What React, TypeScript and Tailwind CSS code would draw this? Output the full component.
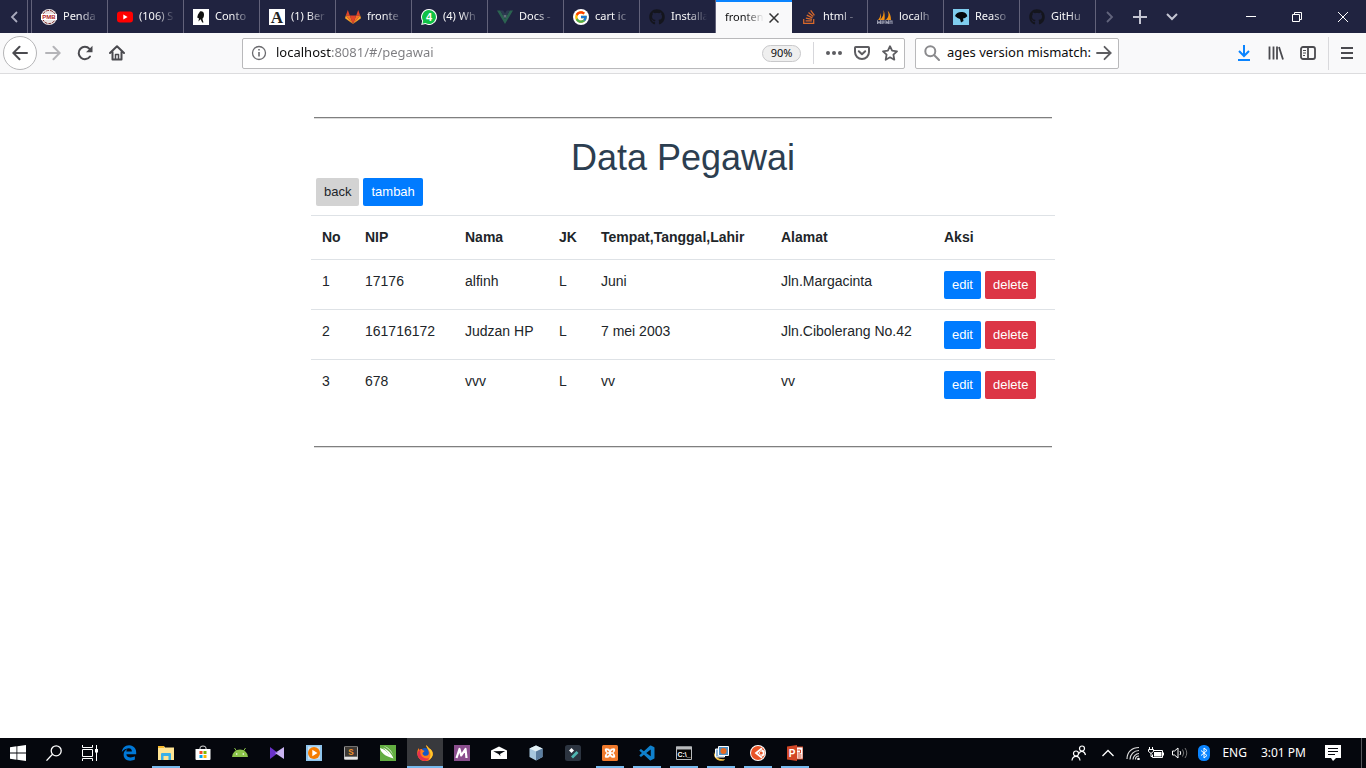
import type { ReactNode } from "react";
import { FaGithub, FaEdgeLegacy, FaStackOverflow } from "react-icons/fa6";
import { FcGoogle } from "react-icons/fc";
import { BiLogoVisualStudio } from "react-icons/bi";

type Tab = { title: string; icon?: ReactNode; active?: boolean };

const tabs: Tab[] = [
  {
    title: "Penda",
    icon: (
      <svg viewBox="0 0 16 16" className="size-4">
        <circle cx="8" cy="8" r="8" fill="#e9e4e4" />
        <circle cx="8" cy="8" r="6.6" fill="none" stroke="#7d2a2a" strokeWidth="1" strokeDasharray="3 1" />
        <rect y="5" width="16" height="6" fill="#fff" />
        <text x="8" y="10.2" fontSize="6" fontWeight="700" textAnchor="middle" fill="#b01e1e" fontFamily="Liberation Sans, sans-serif">PMB</text>
      </svg>
    ),
  },
  {
    title: "(106) S",
    icon: (
      <svg viewBox="0 0 16 16" className="size-4">
        <rect y="2.5" width="16" height="11" rx="3" fill="#f00" />
        <path d="M6.3 5.6v4.8L10.6 8z" fill="#fff" />
      </svg>
    ),
  },
  {
    title: "Conto",
    icon: (
      <svg viewBox="0 0 16 16" className="size-4">
        <rect width="16" height="16" fill="#fff" />
        <path d="M7 2.5c2-.6 4 .5 4 3 0 2-.6 3.6-1.6 4.3l1.1 3.6H9.2L7.6 10.3 5.4 12.5 6 9.5 4.2 8.500 5 5.5z" fill="#111" />
      </svg>
    ),
  },
  {
    title: "(1) Ber",
    icon: (
      <svg viewBox="0 0 16 16" className="size-4">
        <rect width="16" height="16" fill="#fff" />
        <text x="8" y="14" fontSize="17" fontWeight="700" textAnchor="middle" fill="#222" fontFamily="Liberation Serif, serif">A</text>
      </svg>
    ),
  },
  {
    title: "fronte",
    icon: (
      <svg viewBox="0 0 16 16" className="size-4">
        <path d="M2.800 1 4.800 6.500H.8zM13.200 1l2 5.500h-4z" fill="#e24329" />
        <path d="M8 15 4.800 6.500h6.400z" fill="#e24329" />
        <path d="M8 15 .8 6.500h4zM8 15l7.200-8.500h-4z" fill="#fc6d26" />
        <path d="M8 15 .8 6.500 0 9.200zM8 15l7.200-8.500.8 2.700z" fill="#fca326" />
      </svg>
    ),
  },
  {
    title: "(4) Wh",
    icon: (
      <svg viewBox="0 0 16 16" className="size-4">
        <path d="M8 0a8 8 0 1 1-3.700 15.100L.2 16l1-3.900A8 8 0 0 1 8 0z" fill="#fff" />
        <path d="M8 1a7 7 0 1 1-3.500 13.100L1.500 14.700l.7-2.900A7 7 0 0 1 8 1z" fill="#10c146" />
        <text x="8" y="12" fontSize="11" fontWeight="700" textAnchor="middle" fill="#fff" fontFamily="Liberation Sans, sans-serif">4</text>
      </svg>
    ),
  },
  {
    title: "Docs -",
    icon: (
      <svg viewBox="0 0 16 16" className="size-4">
        <path d="M0 1.500h3.200L8 9.800l4.800-8.300H16L8 15z" fill="#2b6350" />
        <path d="M3.200 1.500h3L8 4.600l1.800-3.100h3L8 9.800z" fill="#2c3a50" />
        <path d="M6.700 6h2.600v2.500H6.700z" fill="#63717d" />
      </svg>
    ),
  },
  { title: "cart ic", icon: <span className="flex size-4 items-center justify-center rounded-full bg-white"><FcGoogle className="size-3.5" /></span> },
  { title: "Installa", icon: <FaGithub className="size-4 text-[#14151d]" /> },
  { title: "fronten", active: true },
  {
    title: "html -",
    icon: <FaStackOverflow className="size-4 text-[#d9692a]" />,
  },
  {
    title: "localh",
    icon: (
      <svg viewBox="0 0 16 16" className="size-4">
        <path d="M6.500 1C7 5 6 8 3 11h4.500C8 7 7.800 4 6.500 1zM10.500 1.500C12 5 12 8 8.800 11H14C14 7 13 4 10.500 1.500zM3.500 4C3.600 7 2.600 9 1 11h2c1.200-2 1.300-4.500.5-7z" fill="#f29111" />
        <path d="M.5 15V12l1.500 2 1.500-2v3M5 15v-3h2v2H5m4 1v-3l1.300 2 1.200-2v3m1.500 0v-3h2v3" fill="none" stroke="#9a9db0" strokeWidth="1.100" />
      </svg>
    ),
  },
  {
    title: "Reaso",
    icon: (
      <svg viewBox="0 0 16 16" className="size-4">
        <rect width="16" height="16" fill="#7fcdee" />
        <path d="M2 7c1-3 4-4.500 7.500-4 3 .4 4.500 2 4.800 4.200L12 9l-2 .5.5 2.500-2.500 1.500L7 10 4.500 9z" fill="#05080b" />
      </svg>
    ),
  },
  { title: "GitHu", icon: <FaGithub className="size-4 text-[#14151d]" /> },
];

function TabItem({ tab }: { tab: Tab }) {
  if (tab.active) {
    return (
      <div role="tab" aria-selected="true" className="flex w-[76px] shrink-0 items-center border-t-2 border-[#0a84ff] bg-[#f9f9fa] pl-[9px] text-[#0c0c0d]">
        <span className="w-[39px] whitespace-nowrap [mask-image:linear-gradient(to_right,black_50%,transparent)]">{tab.title}</span>
        <button aria-label="Close tab" className="ml-[5px] flex">
          <svg viewBox="0 0 10 10" className="size-2.5" fill="none" stroke="#333" strokeWidth="1.500">
            <path d="m.5.5 9 9m0-9-9 9" />
          </svg>
        </button>
      </div>
    );
  }
  return (
    <div role="tab" aria-selected="false" className="flex w-[76px] shrink-0 items-center border-r border-[#62627a] pr-1.5 pl-[9px]">
      <span className="flex size-4 shrink-0">{tab.icon}</span>
      <span className="ml-1.5 min-w-0 flex-1 whitespace-nowrap [mask-image:linear-gradient(to_right,black_45%,transparent_95%)]">{tab.title}</span>
    </div>
  );
}

function TabBar() {
  return (
    <div className="flex h-[33px] bg-[#202340] text-[11px] text-[#f9f9fa]">
      <button aria-label="Scroll tabs left" className="flex w-7 shrink-0 items-center justify-center border-r border-[#62627a]">
        <svg viewBox="0 0 8 12" className="h-3 w-2" fill="none" stroke="#a9aabd" strokeWidth="1.800"><path d="M7 1 2 6l5 5" /></svg>
      </button>
      <div role="tablist" className="flex min-w-0 pl-[3px]">
        <div className="flex border-l border-[#62627a]">
          {tabs.map((t, i) => <TabItem key={i} tab={t} />)}
        </div>
      </div>
      <button aria-label="Scroll tabs right" className="flex w-7 shrink-0 items-center justify-center">
        <svg viewBox="0 0 8 12" className="h-3 w-2" fill="none" stroke="#62647c" strokeWidth="1.800"><path d="m1 1 5 5-5 5" /></svg>
      </button>
      <button aria-label="New tab" className="flex w-8 shrink-0 items-center justify-center">
        <svg viewBox="0 0 14 14" className="size-3.5" stroke="#c4c5d2" strokeWidth="2"><path d="M7 0v14M0 7h14" /></svg>
      </button>
      <button aria-label="List all tabs" className="flex w-8 shrink-0 items-center justify-center">
        <svg viewBox="0 0 12 8" className="h-2 w-3" fill="none" stroke="#c4c5d2" strokeWidth="2"><path d="m1 1 5 5 5-5" /></svg>
      </button>
      <div className="ml-auto flex">
        <button aria-label="Minimize" className="flex w-[46px] items-center justify-center">
          <svg viewBox="0 0 10 10" className="size-2.5" stroke="#fff"><path d="M0 4.500h10" /></svg>
        </button>
        <button aria-label="Restore" className="flex w-[46px] items-center justify-center">
          <svg viewBox="0 0 10 10" className="size-2.5" fill="none" stroke="#fff"><path d="M.5 2.500h7v7h-7zM2.500 2.500v-2h7v7h-2" /></svg>
        </button>
        <button aria-label="Close" className="flex w-[46px] items-center justify-center">
          <svg viewBox="0 0 10 10" className="size-2.5" stroke="#fff"><path d="m0 0 10 10M10 0 0 10" /></svg>
        </button>
      </div>
    </div>
  );
}

function NavBar() {
  return (
    <div className="flex h-[41px] items-center border-b border-[#dcdcde] bg-[#f9f9fa] text-[#4a4a4f]">
      <button aria-label="Back" className="ml-[3px] flex size-[34px] shrink-0 items-center justify-center rounded-full border border-[#b5b5b7] bg-white">
        <svg viewBox="0 0 16 16" className="size-4" fill="none" stroke="#4a4a4f" strokeWidth="2" strokeLinecap="round"><path d="M15 8H1.500M7.500 1.800 1.300 8l6.200 6.200" /></svg>
      </button>
      <button aria-label="Forward" className="flex w-8 shrink-0 items-center justify-center">
        <svg viewBox="0 0 16 16" className="size-4" fill="none" stroke="#b4b4b8" strokeWidth="2" strokeLinecap="round"><path d="M1 8h13.500M8.500 1.800 14.700 8l-6.200 6.200" /></svg>
      </button>
      <button aria-label="Reload" className="flex w-8 shrink-0 items-center justify-center">
        <svg viewBox="0 0 16 16" className="size-4" fill="none" stroke="#4a4a4f" strokeWidth="2" strokeLinecap="round">
          <path d="M13 11.500A6.200 6.200 0 1 1 12.500 3.800" />
          <path d="M15.500.8v6.400H9z" fill="#4a4a4f" stroke="none" />
        </svg>
      </button>
      <button aria-label="Home" className="flex w-8 shrink-0 items-center justify-center">
        <svg viewBox="0 0 16 16" className="size-4" fill="none" stroke="#4a4a4f" strokeWidth="2" strokeLinejoin="round" strokeLinecap="round">
          <path d="m1 8 7-6.800L15 8M3.500 7v7.500h9V7" />
          <path d="M6.500 14V9.500h3V14" strokeWidth="1.500" />
        </svg>
      </button>
      <div className="ml-[109px] flex h-[31px] min-w-0 flex-1 items-center rounded-xs border border-[#b9b9bb] bg-white">
        <svg viewBox="0 0 16 16" className="ml-2 size-4 shrink-0" fill="none" stroke="#6a6a6e" strokeWidth="1.300">
          <circle cx="8" cy="8" r="6.500" /><path d="M8 7v4.500M8 4v1.600" strokeWidth="1.600" />
        </svg>
        <input
          aria-label="Address"
          defaultValue="localhost:8081/#/pegawai"
          className="ml-[9px] min-w-0 flex-1 bg-[linear-gradient(to_right,#0c0c0d_56px,#7c7c80_56px)] bg-clip-text text-[13px] text-transparent outline-none"
        />
        <button aria-label="Zoom level" className="h-[17px] w-[39px] rounded-full border border-[#c8c8ca] bg-[#efefef] text-[11px] leading-[14px] text-[#0c0c0d]">90%</button>
        <span className="ml-3 h-[22px] w-px bg-[#d7d7db]" />
        <button aria-label="Page actions" className="ml-3 flex">
          <svg viewBox="0 0 16 16" className="size-4" fill="#5d5d61"><circle cx="2" cy="8" r="2" /><circle cx="8" cy="8" r="2" /><circle cx="14" cy="8" r="2" /></svg>
        </button>
        <button aria-label="Save to Pocket" className="ml-3 flex">
          <svg viewBox="0 0 16 16" className="size-4" fill="none" stroke="#5d5d61" strokeWidth="2" strokeLinecap="round" strokeLinejoin="round">
            <path d="M1.800 2h12.400q.8 0 .8.800V7A7 7 0 0 1 1 7V2.800Q1 2 1.800 2z" /><path d="M4.800 6.300 8 9.300l3.200-3" />
          </svg>
        </button>
        <button aria-label="Bookmark" className="mr-1.5 ml-3 flex">
          <svg viewBox="0 0 16 16" className="size-4" fill="none" stroke="#5d5d61" strokeWidth="1.800" strokeLinejoin="round">
            <path d="m8 1.200 2.100 4.500 4.900.6-3.600 3.400.9 5L8 12.300l-4.300 2.400.9-5L1 6.300l4.900-.6z" />
          </svg>
        </button>
      </div>
      <div className="ml-2.5 flex h-[31px] w-[204px] shrink-0 items-center rounded-xs border border-[#b9b9bb] bg-white">
        <svg viewBox="0 0 16 16" className="ml-2 size-4 shrink-0" fill="none" stroke="#8a8a8d" strokeWidth="2" strokeLinecap="round"><circle cx="6.300" cy="6.300" r="5" /><path d="m10.300 10.300 4.700 4.700" /></svg>
        <input aria-label="Search" defaultValue="ages version mismatch:" className="ml-[7px] min-w-0 flex-1 text-[13px] text-[#0c0c0d] outline-none" />
        <button aria-label="Submit search" className="mr-1.5 flex">
          <svg viewBox="0 0 16 16" className="size-4" fill="none" stroke="#5d5d61" strokeWidth="1.800" strokeLinecap="round"><path d="M1 8h13.500M8.500 1.800 14.700 8l-6.200 6.200" /></svg>
        </button>
      </div>
      <button aria-label="Downloads" className="ml-[109px] flex w-8 shrink-0 items-center justify-center">
        <svg viewBox="0 0 12 16" className="h-4 w-3" fill="none" stroke="#0a84ff" strokeWidth="2"><path d="M6 0v10.500M1 6l5 5 5-5M0 15h12" /></svg>
      </button>
      <button aria-label="Library" className="flex w-8 shrink-0 items-center justify-center">
        <svg viewBox="0 0 16 16" className="size-4" fill="none" stroke="#4a4a4f" strokeWidth="1.800"><path d="M1.500 1.500v13M5.500 1.500v13M9 1.500v13M11 2l4 12.500" /></svg>
      </button>
      <button aria-label="Sidebars" className="flex w-8 shrink-0 items-center justify-center">
        <svg viewBox="0 0 16 16" className="size-4" fill="none" stroke="#4a4a4f" strokeWidth="1.800">
          <rect x="1" y="2" width="14" height="12" rx="2" /><path d="M8 2v12" /><path d="M3 5.500h3M3 8h3M3 10.500h2" strokeWidth="1" />
        </svg>
      </button>
      <span className="ml-1 h-[33px] w-px bg-[#d9d9dc]" />
      <button aria-label="Menu" className="mr-[13px] ml-3 flex">
        <svg viewBox="0 0 12 14" className="h-3.5 w-3" stroke="#4a4a4f" strokeWidth="2"><path d="M0 2h12M0 7h12M0 12h12" /></svg>
      </button>
    </div>
  );
}

const rows = [
  { no: 1, nip: "17176", nama: "alfinh", jk: "L", ttl: "Juni", alamat: "Jln.Margacinta" },
  { no: 2, nip: "161716172", nama: "Judzan HP", jk: "L", ttl: "7 mei 2003", alamat: "Jln.Cibolerang No.42" },
  { no: 3, nip: "678", nama: "vvv", jk: "L", ttl: "vv", alamat: "vv" },
];

const columns = [
  { title: "No", width: "w-[43px]" },
  { title: "NIP", width: "w-[100px]" },
  { title: "Nama", width: "w-[94px]" },
  { title: "JK", width: "w-[42px]" },
  { title: "Tempat,Tanggal,Lahir", width: "w-[180px]" },
  { title: "Alamat", width: "w-[163px]" },
  { title: "Aksi", width: "w-[122px]" },
];

function Button({ tone, children }: { tone: string; children: ReactNode }) {
  return <button className={`h-7 rounded-xs px-2 text-[13px] leading-5 ${tone}`}>{children}</button>;
}

const cell = "border-t border-[#dee2e6] px-[11px]";

function Page() {
  return (
    <main className="mx-auto w-full max-w-[744px] pt-[43px] font-['Liberation_Sans',Arial,sans-serif]">
      <hr className="mx-[3px] h-0.5 border-t border-b border-t-[#7f7f7f] border-b-[#dcdcdc]" />
      <h1 className="pt-[19px] text-center text-4xl leading-10 text-[#2c3e50]">Data Pegawai</h1>
      <div className="flex gap-1 pl-[5px]">
        <Button tone="bg-[#d3d3d3] text-[#212529]">back</Button>
        <Button tone="bg-[#007bff] text-white">tambah</Button>
      </div>
      <table className="mt-[9px] w-full table-fixed border-separate border-spacing-0 text-left text-sm leading-[21px] text-[#212529]">
        <thead>
          <tr>
            {columns.map((c) => (
              <th key={c.title} className={`${cell} ${c.width} py-[11px] font-bold whitespace-nowrap`}>{c.title}</th>
            ))}
          </tr>
        </thead>
        <tbody>
          {rows.map((r) => (
            <tr key={r.no} className="align-top">
              {[r.no, r.nip, r.nama, r.jk, r.ttl, r.alamat].map((v, i) => (
                <td key={i} className={`${cell} py-[11px] whitespace-nowrap`}>{v}</td>
              ))}
              <td className={`${cell} pt-[11px] pb-2.5`}>
                <div className="flex gap-1">
                  <Button tone="bg-[#007bff] text-white">edit</Button>
                  <Button tone="bg-[#dc3545] text-white">delete</Button>
                </div>
              </td>
            </tr>
          ))}
        </tbody>
      </table>
      <hr className="mx-[3px] mt-[37px] h-0.5 border-t border-b border-t-[#7f7f7f] border-b-[#dcdcdc]" />
    </main>
  );
}

type App = { name: string; icon: ReactNode; open?: boolean; active?: boolean };

const apps: App[] = [
  { name: "Edge", icon: <FaEdgeLegacy className="size-4 text-[#0078d7]" /> },
  {
    name: "File Explorer",
    open: true,
    icon: (
      <svg viewBox="0 0 16 16" className="size-4">
        <path d="M0 1h6l1 1.500h9V15H0z" fill="#ffe493" /><path d="M0 1h6v2H0z" fill="#f7b92d" />
        <path d="M3 15V9q0-1 1-1h8q1 0 1 1v6h-2.500v-4h-5v4z" fill="#39b0e8" />
      </svg>
    ),
  },
  {
    name: "Store",
    icon: (
      <svg viewBox="0 0 16 16" className="size-4">
        <path d="M5 5V3q0-2 3-2t3 2v2" fill="none" stroke="#ddd" /><path d="M.5 4h15v10q0 1-1 1h-13q-1 0-1-1z" fill="#fff" />
        <path d="M4.500 6H7.500v3h-3z" fill="#f04e23" /><path d="M8.500 6h3v3h-3z" fill="#7fb900" /><path d="M4.500 10h3v3h-3z" fill="#00a3ee" /><path d="M8.500 10h3v3h-3z" fill="#fdb800" />
      </svg>
    ),
  },
  {
    name: "Android",
    icon: (
      <svg viewBox="0 0 16 16" className="size-4">
        <path d="M0 12a8 7.500 0 0 1 16 0z" fill="#8bc34a" /><path d="m2.500 3 2 3m9-3-2 3" stroke="#8bc34a" /><circle cx="4.700" cy="9" r=".8" fill="#fff" /><circle cx="11.300" cy="9" r=".8" fill="#fff" />
      </svg>
    ),
  },
  {
    name: "Visual Studio",
    icon: (
      <svg viewBox="0 0 16 16" className="size-4">
        <path d="m1 2 8 6-8 6z" fill="#6a32c9" /><path d="M15 2 6 8l9 6z" fill="#c9b4f2" /><path d="m9 8-3 0 1.500-1.200z" fill="#8e5ee0" />
      </svg>
    ),
  },
  {
    name: "Media Player",
    icon: (
      <svg viewBox="0 0 16 16" className="size-4">
        <path d="M0 0h16v16H0z" fill="#8fc4ec" /><path d="M2 1.500h12v13H2z" fill="#c8e2f5" /><circle cx="8" cy="8" r="6" fill="#f57c00" /><path d="M6.300 4.800v6.400L11.500 8z" fill="#fff" />
      </svg>
    ),
  },
  {
    name: "Sublime Text",
    icon: (
      <svg viewBox="0 0 16 16" className="size-4">
        <rect x="1" y="1" width="14" height="14" rx="1.500" fill="#aaa" /><rect x="2" y="1.500" width="12" height="10" fill="#3d3935" /><path d="M1.500 12h13v2h-13z" fill="#e7e7e7" />
        <text x="8" y="10" fontSize="9" fontWeight="700" textAnchor="middle" fill="#f0922b" fontFamily="Liberation Mono, monospace">S</text>
      </svg>
    ),
  },
  {
    name: "CorelDRAW",
    icon: (
      <svg viewBox="0 0 16 16" className="size-4">
        <path d="M0 0h16v16H0z" fill="#62ad41" /><path d="M0 3C1 8 5 11 13.500 13.500 11.500 8 7 4 2.500 2.500 6 5 8.500 8 9.500 10 7 6.500 4 4 0 3zM3.500.8C8 3 12 7 13.800 11.500 12 6 8.500 2.500 3.500.8z" fill="#fff" />
      </svg>
    ),
  },
  {
    name: "Firefox",
    open: true,
    active: true,
    icon: (
      <svg viewBox="0 0 16 16" className="size-4">
        <circle cx="8" cy="8.500" r="5.500" fill="#1558c4" />
        <path d="M9 0c1 1 2.200 2 3 3.200l1.600 1C15.500 6 16 7.500 15.800 9.500A7.800 7.800 0 0 1 .3 9C0 6.500.7 4.300 2 3v2c1-1 2-1.200 3-1 .3 1 1 1.700 2.500 1.700C7.300 7 6 7 5.500 8c0 2 1.700 3 3.500 2.800 2-.3 3-1.600 2.800-3.300C11.500 4 9.500 2.500 9 0z" fill="#ff7a1a" />
        <path d="M9 0c1 1 2.200 2 3 3.200l1.600 1c2 2 2.300 4 2.100 6-.7 2-2 3.500-4 4.500 2-3 2.300-5.500 1-8C11.600 4.500 9.400 2.500 9 0z" fill="#ffca2b" />
        <path d="M.3 9C.7 6.500 2 5 4 4.500 2.500 7 3.500 11.500 7.500 13c2 .8 4 .5 5-.2-1 2-3 3.200-5 3.100C3.500 15.700.7 12.500.3 9z" fill="#e8314d" />
      </svg>
    ),
  },
  {
    name: "M editor",
    icon: (
      <svg viewBox="0 0 16 16" className="size-4">
        <path d="M0 0h16v16H0z" fill="#8a4e8d" /><path d="M2.500 13 5.500 4l1.700 6.500L11.500 4l1 9" fill="none" stroke="#fff" strokeWidth="2.200" strokeLinejoin="round" />
      </svg>
    ),
  },
  {
    name: "Mail",
    icon: (
      <svg viewBox="0 0 16 16" className="size-4">
        <path d="m0 5.500 8-4 8 4V14H0z" fill="#fff" /><path d="m2.200 6.300 12-.3-5.200 3 .5 2.300-2-2.300z" fill="#04070d" />
      </svg>
    ),
  },
  {
    name: "NetBeans",
    icon: (
      <svg viewBox="0 0 16 16" className="size-4">
        <path d="m8 .5 6.500 3V12L8 15.500 1.500 12V3.500z" fill="#a8c8df" /><path d="m8 .5 6.500 3L8 6.500l-6.500-3z" fill="#e3eff4" /><path d="M8 6.500v9L14.500 12V3.500z" fill="#5b7d9f" />
      </svg>
    ),
  },
  {
    name: "Filmora",
    icon: (
      <svg viewBox="0 0 16 16" className="size-4">
        <rect width="16" height="16" rx="2.500" fill="#2c3440" /><path d="m6.500 3 2.500 2.500L6.500 8 4 5.500z" fill="#fff" /><path d="m11.500 6 2 2-5.500 5.500-2-2z" fill="#4fb5b0" />
      </svg>
    ),
  },
  {
    name: "XAMPP",
    open: true,
    icon: (
      <svg viewBox="0 0 16 16" className="size-4">
        <rect width="16" height="16" rx="1.500" fill="#f07a2c" />
        <path d="M4 3.200q4 0 4 2.300 0-2.300 4-2.300 1.200 0 1.200 1.600 0 2-1.800 3.200 1.800 1.200 1.800 3.200 0 1.600-1.200 1.600-4 0-4-2.300 0 2.300-4 2.300-1.200 0-1.200-1.600 0-2 1.800-3.200Q2.800 6.800 2.800 4.800 2.800 3.200 4 3.200z" fill="#fff" />
        <path d="M5.200 5.500q1.500.3 1.300 1.500L5.500 7zM10.800 5.500Q9.300 5.800 9.500 7l1 0zM5.200 10.500q1.500-.3 1.300-1.500L5.500 9zM10.800 10.500q-1.500-.3-1.300-1.500l1 0z" fill="#f07a2c" stroke="#f07a2c" strokeWidth=".7" />
      </svg>
    ),
  },
  { name: "VS Code", open: true, icon: <BiLogoVisualStudio className="size-[18px] text-[#0f80cc]" /> },
  {
    name: "Command Prompt",
    open: true,
    icon: (
      <svg viewBox="0 0 16 16" className="size-4">
        <path d="M.5 2h15v12.500H.5z" fill="#050505" stroke="#b8babd" /><path d="M0 1.500h16v3H0z" fill="#b8babd" />
        <text x="8" y="11.500" fontSize="7" fontWeight="700" textAnchor="middle" fill="#fff" fontFamily="Liberation Sans, sans-serif">C:\_</text>
      </svg>
    ),
  },
  {
    name: "Pictures",
    open: true,
    icon: (
      <svg viewBox="0 0 16 16" className="size-4">
        <path d="M1 7c1 5 5 8 11 7l-1 1.500C5 17 0 13 1 7z" fill="#f6c343" /><path d="M2.500 4h9v8h-9z" fill="#8db4d6" stroke="#fff" />
        <path d="M5.500 1.500h10v9h-10z" fill="#4f8fc2" stroke="#fff" /><circle cx="10.500" cy="6" r="3" fill="#e66a20" />
      </svg>
    ),
  },
  {
    name: "Recorder",
    open: true,
    icon: (
      <svg viewBox="0 0 16 16" className="size-4">
        <circle cx="8" cy="8" r="8" fill="#fff" />
        <circle cx="8" cy="8" r="7" fill="#e85426" />
        <path d="M12 3.200 6 8l6 4.800" fill="none" stroke="#fff" strokeWidth="1.800" />
        <path d="m12.500 4.500 2 1.500v4l-2 1.500L8.500 8z" fill="#fff" />
        <circle cx="11.300" cy="8" r="1.500" fill="#e85426" />
      </svg>
    ),
  },
  {
    name: "PowerPoint",
    open: true,
    icon: (
      <svg viewBox="0 0 16 16" className="size-4">
        <path d="M8 2h8v12H8z" fill="#fff" stroke="#d24726" /><path d="M10.500 5h3v3h-3M10.500 10h4m-4 2h4" fill="none" stroke="#d24726" /><path d="m0 1.500 10-1.500v16L0 14.500z" fill="#d24726" />
        <text x="5" y="11.500" fontSize="10" fontWeight="700" textAnchor="middle" fill="#fff" fontFamily="Liberation Sans, sans-serif">P</text>
      </svg>
    ),
  },
];

function Taskbar() {
  return (
    <footer className="flex h-[30px] shrink-0 bg-[#05070d] text-xs text-white">
      <button aria-label="Start" className="flex w-9 items-center justify-center">
        <svg viewBox="0 0 16 16" className="size-4" fill="#fff"><path d="m0 2.200 6.500-.9v6.300H0zM7.300 1.200 16 0v7.600H7.300zM0 8.400h6.500v6.300L0 13.800zM7.300 8.400H16V16l-8.700-1.200z" /></svg>
      </button>
      <button aria-label="Search Windows" className="flex w-9 items-center justify-center">
        <svg viewBox="0 0 16 16" className="size-4" fill="none" stroke="#fff" strokeWidth="1.300"><circle cx="10.200" cy="5.800" r="5" /><path d="M6.500 9.300.5 15.600" /></svg>
      </button>
      <button aria-label="Task view" className="mr-[3px] flex w-9 items-center justify-center">
        <svg viewBox="0 0 16 16" className="size-4" fill="none" stroke="#fff"><path d="M.5 0v2.500h10V0M.5 4.500h10v7H.5zM.5 16v-2.500h10V16M14.500 0v16" /><path d="M13 4h3v3.500h-3z" fill="#fff" stroke="none" /></svg>
      </button>
      <div className="flex gap-px">
        {apps.map((a) => (
          <button
            key={a.name}
            aria-label={a.name}
            className={`flex w-9 flex-col items-center ${a.active ? "bg-[#38393d]" : ""}`}
          >
            <span className="flex h-7 w-full items-center justify-center pt-0.5">{a.icon}</span>
            {a.open && <span className={`h-0.5 bg-[#76b9ed] ${a.active ? "w-9" : "w-7"}`} />}
          </button>
        ))}
      </div>
      <div className="ml-auto flex items-center">
        <button aria-label="People" className="mr-[15px] flex">
          <svg viewBox="0 0 16 16" className="size-4" fill="none" stroke="#fff" strokeWidth="1.200"><circle cx="11" cy="3.500" r="2.500" /><path d="M8 8.500c1-3 5.500-3 6.500 1.500" /><circle cx="5" cy="8.500" r="2.500" /><path d="M1 15.500c.5-5.500 7.500-5.500 8 0" /></svg>
        </button>
        <button aria-label="Hidden icons" className="mr-3 flex">
          <svg viewBox="0 0 12 8" className="h-2 w-3" fill="none" stroke="#fff" strokeWidth="1.300"><path d="m.5 7 5.500-5.500L11.500 7" /></svg>
        </button>
        <button aria-label="Network" className="mr-2 flex">
          <svg viewBox="0 0 14 14" className="size-3.5" fill="none" stroke="#ddd" strokeWidth="1.200"><path d="M1 13C1 6 6 1.500 13 1.500M4 13.500c0-5 4-9 9-9M7 13.500c0-3 3-6 6-6M9.500 13.500c0-2 1.500-3.500 3.500-3.500" /><circle cx="12.500" cy="13" r="1.300" fill="#fff" stroke="none" /></svg>
        </button>
        <button aria-label="Battery" className="mr-2 flex">
          <svg viewBox="0 0 16 14" className="h-3.5 w-4" fill="none" stroke="#fff"><path d="M5.500 4.500h9v7h-10v-3M15.500 6.500v3" /><path d="M6 6h7.500v4.500H6z" fill="#fff" stroke="none" /><path d="M1.500 1v2m3-2v2M.5 3.500h5v2l-2 1.500h-1L.5 5.500zM3 7v3.500h2" /></svg>
        </button>
        <button aria-label="Volume" className="mr-2.5 flex">
          <svg viewBox="0 0 16 14" className="h-3.5 w-4" fill="none" stroke="#fff"><path d="M.5 5h2L6 2v10L2.500 9h-2z" /><path d="M8 5q1.500 2 0 4" /><path d="M10.500 3.500q2.500 3.500 0 7M13 2q3.500 5 0 10" stroke="#777" /></svg>
        </button>
        <button aria-label="Bluetooth" className="mr-3 flex">
          <svg viewBox="0 0 12 16" className="h-4 w-3"><rect width="12" height="16" rx="5.500" fill="#0a84ff" /><path d="m3 5.500 6 5-3 2.500V3l3 2.500-6 5" fill="none" stroke="#fff" /></svg>
        </button>
        <span className="mr-3.5">ENG</span>
        <time className="mr-[19px]">3:01 PM</time>
        <button aria-label="Notifications" className="mr-5 flex">
          <svg viewBox="0 0 16 16" className="size-4"><path d="M0 0h16v13h-5l-3 3-2-3H0z" fill="#fff" /><path d="M3 3.500h10M3 6.500h10M3 9.500h7" stroke="#05070d" /></svg>
        </button>
        <span className="mr-1 h-[30px] w-px bg-[#55575c]" />
      </div>
    </footer>
  );
}

export default function App() {
  return (
    <div className="flex min-h-screen flex-col bg-white font-['Noto_Sans','Open_Sans',sans-serif]">
      <TabBar />
      <NavBar />
      <div className="flex-1">
        <Page />
      </div>
      <Taskbar />
    </div>
  );
}
